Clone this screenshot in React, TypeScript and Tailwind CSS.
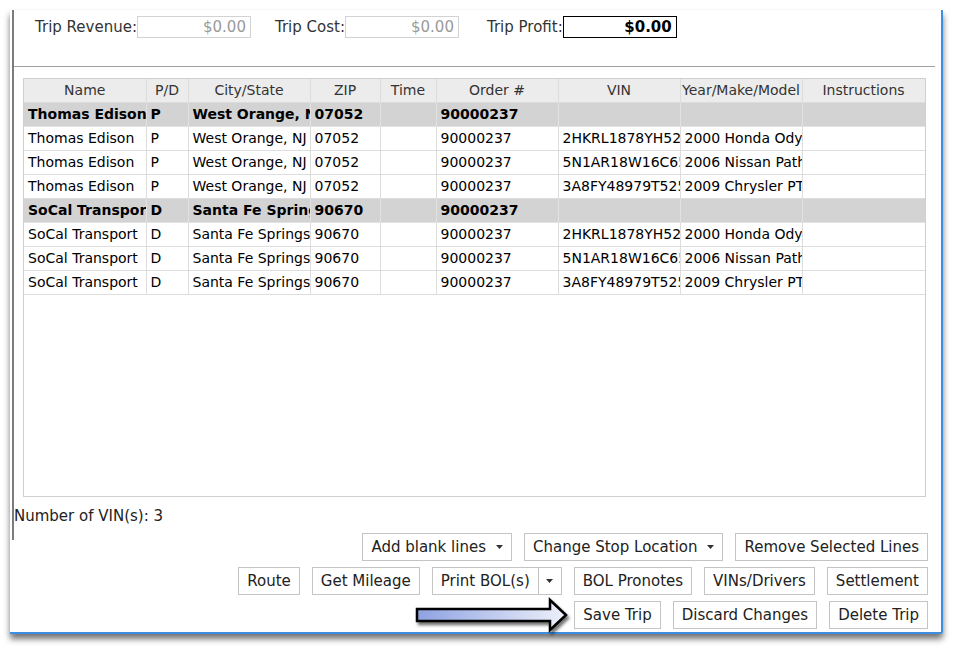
import React from 'react';

type Stop = {
  name: string;
  pd: string;
  city: string;
  zip: string;
  time: string;
  order: string;
  vin: string;
  ymm: string;
  instructions: string;
  group?: boolean;
};

const columns = [
  { label: 'Name', w: 'w-[122px]' },
  { label: 'P/D', w: 'w-[42px]' },
  { label: 'City/State', w: 'w-[122px]' },
  { label: 'ZIP', w: 'w-[70px]' },
  { label: 'Time', w: 'w-[56px]' },
  { label: 'Order #', w: 'w-[122px]' },
  { label: 'VIN', w: 'w-[122px]' },
  { label: 'Year/Make/Model', w: 'w-[122px]' },
  { label: 'Instructions', w: 'w-[123px]' },
];

const pickup = { name: 'Thomas Edison', pd: 'P', city: 'West Orange, NJ', zip: '07052', time: '', order: '90000237', instructions: '' };
const drop = { name: 'SoCal Transport', pd: 'D', city: 'Santa Fe Springs', zip: '90670', time: '', order: '90000237', instructions: '' };

const vehicles = [
  { vin: '2HKRL1878YH523481', ymm: '2000 Honda Odyssey' },
  { vin: '5N1AR18W16C652290', ymm: '2006 Nissan Pathfinder' },
  { vin: '3A8FY48979T525117', ymm: '2009 Chrysler PT Cruiser' },
];

const stops: Stop[] = [
  { ...pickup, vin: '', ymm: '', group: true },
  ...vehicles.map((v) => ({ ...pickup, ...v })),
  { ...drop, vin: '', ymm: '', group: true },
  ...vehicles.map((v) => ({ ...drop, ...v })),
];

function Caret() {
  return (
    <svg width="7" height="4" viewBox="0 0 7 4" className="shrink-0">
      <path d="M0 0 H7 L3.5 4 Z" fill="#333" />
    </svg>
  );
}

function Btn({ children, className = '' }: { children: React.ReactNode; className?: string }) {
  return (
    <button className={`h-[28px] px-[8px] flex items-center gap-[10px] bg-white border border-[#c4c4c4] text-[15px] text-[#222] whitespace-nowrap ${className}`}>
      {children}
    </button>
  );
}

function MoneyField({ label, value, strong, className = '' }: { label: string; value: string; strong?: boolean; className?: string }) {
  return (
    <div className={`flex items-center ${className}`}>
      <span className="text-[15px] text-[#333]">{label}</span>
      <div
        className={`w-[114px] h-[22px] flex items-center justify-end pr-[4px] text-[15px] ${
          strong ? 'border-[1.5px] border-black font-bold text-black' : 'border border-[#d2d2d2] text-[#9a9a9a]'
        }`}
      >
        {value}
      </div>
    </div>
  );
}

function Arrow() {
  return (
    <svg width="154" height="34" viewBox="0 0 154 34" className="-my-[3px] -mr-[6px] overflow-visible">
      <defs>
        <linearGradient id="arrowFill" x1="0" x2="1" y1="0" y2="0">
          <stop offset="0" stopColor="#8ea2e2" />
          <stop offset="1" stopColor="#eef1fa" />
        </linearGradient>
        <filter id="arrowShadow" x="-10%" y="-30%" width="130%" height="180%">
          <feDropShadow dx="2" dy="3" stdDeviation="1.4" floodColor="#000" floodOpacity="0.55" />
        </filter>
      </defs>
      <polygon
        points="3,11 136,11 136,2 152,17 136,32 136,23 3,23"
        fill="url(#arrowFill)"
        stroke="#000"
        strokeWidth="2.5"
        strokeLinejoin="miter"
        filter="url(#arrowShadow)"
      />
    </svg>
  );
}

export default function App() {
  return (
    <div className="w-[955px] h-[649px] bg-white overflow-hidden font-['DejaVu_Sans',sans-serif]">
      {/* trip editor window */}
      <div className="mt-[10px] ml-[10px] w-[933px] h-[624px] bg-white border-r-2 border-b-2 border-[#3d8ee0] rounded-br-[3px] shadow-[0_5px_6px_rgba(0,0,0,0.55)] pl-[2px]">
        <div className="w-[923px] border-l-2 border-[#7c7c7c] pb-[14px]">
          {/* money totals */}
          <div className="h-[57px] border-b border-[#a0a0a0] pt-[6px] pl-[21px] flex items-start gap-[24px]">
            <MoneyField label="Trip Revenue:" value="$0.00" />
            <MoneyField label="Trip Cost:" value="$0.00" />
            <MoneyField label="Trip Profit:" value="$0.00" strong className="ml-[4px]" />
          </div>

          {/* stops grid */}
          <div className="ml-[9px] mt-[11px] w-[903px] h-[419px] border border-[#cfcfcf] bg-white overflow-hidden">
            <table className="w-[901px] table-fixed border-collapse text-[14px] text-black">
              <colgroup>
                {columns.map((c) => (
                  <col key={c.label} className={c.w} />
                ))}
              </colgroup>
              <thead>
                <tr className="h-[23px] bg-[#ececec]">
                  {columns.map((c) => (
                    <th
                      key={c.label}
                      className="border-r border-b border-[#dcdcdc] font-normal text-[#333] text-center whitespace-nowrap overflow-hidden p-0"
                    >
                      {c.label}
                    </th>
                  ))}
                </tr>
              </thead>
              <tbody>
                {stops.map((s, i) => {
                  const cells = [s.name, s.pd, s.city, s.zip, s.time, s.order, s.vin, s.ymm, s.instructions];
                  return (
                    <tr key={i} className={`h-[24px] ${s.group ? 'bg-[#d3d3d3] font-bold' : 'bg-white'}`}>
                      {cells.map((v, j) => (
                        <td
                          key={j}
                          className={`border-r border-b ${
                            s.group ? 'border-[#e2e2e2]' : 'border-[#dddddd]'
                          } pl-[4px] pr-0 py-0 whitespace-nowrap overflow-hidden text-clip`}
                        >
                          {v}
                        </td>
                      ))}
                    </tr>
                  );
                })}
              </tbody>
            </table>
          </div>

          <div className="mt-[9px] h-[20px] leading-[20px] text-[15px] text-[#222]">Number of VIN(s): 3</div>
        </div>

        {/* action buttons */}
        <div className="-mt-[7px] pr-[13px] flex flex-col items-end gap-[6px]">
          <div className="flex gap-[12px]">
            <Btn>
              Add blank lines <Caret />
            </Btn>
            <Btn>
              Change Stop Location <Caret />
            </Btn>
            <Btn>Remove Selected Lines</Btn>
          </div>
          <div className="flex gap-[12px]">
            <Btn>Route</Btn>
            <Btn>Get Mileage</Btn>
            <div className="flex">
              <Btn>Print BOL(s)</Btn>
              <Btn className="-ml-px w-[24px] justify-center px-0">
                <Caret />
              </Btn>
            </div>
            <Btn>BOL Pronotes</Btn>
            <Btn>VINs/Drivers</Btn>
            <Btn>Settlement</Btn>
          </div>
          <div className="flex items-center gap-[12px]">
            <Arrow />
            <Btn>Save Trip</Btn>
            <Btn>Discard Changes</Btn>
            <Btn>Delete Trip</Btn>
          </div>
        </div>
      </div>
    </div>
  );
}
